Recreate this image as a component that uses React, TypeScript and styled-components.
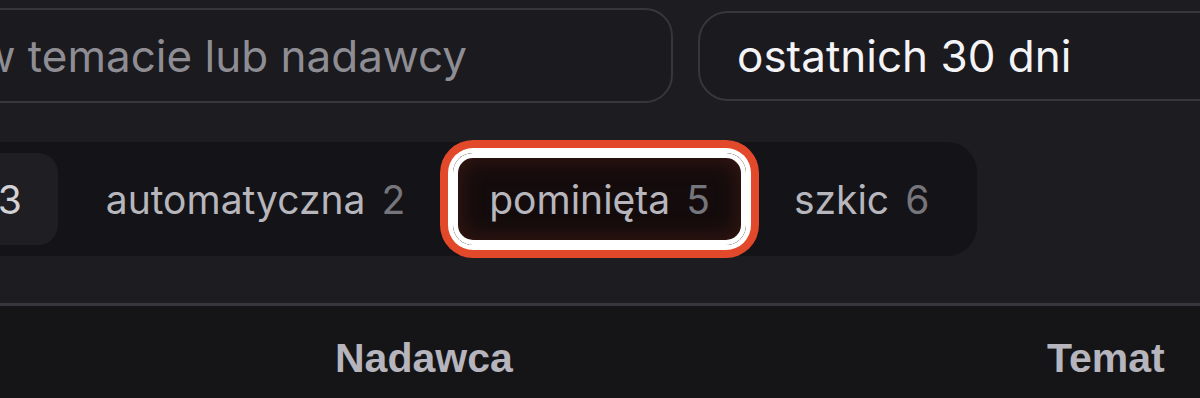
import React from "react";
import styled, { createGlobalStyle } from "styled-components";

const GlobalStyle = createGlobalStyle`
  html, body { margin: 0; padding: 0; background: #1d1c21; }
  body {
    width: 1200px;
    height: 398px;
    overflow: hidden;
    font-family: Inter, "Noto Sans", sans-serif;
  }
  #root { height: 398px; }
`;

const Page = styled.div`
  height: 398px;
  display: flex;
  flex-direction: column;
  overflow: hidden;
`;

const Toolbar = styled.div`
  display: flex;
  flex-direction: column;
  gap: 39px;
  padding: 8px 0 47px;
  margin-left: -220px;
`;

const FilterRow = styled.div`
  display: flex;
  align-items: center;
  gap: 25px;
`;

const SearchInput = styled.input`
  flex: 0 0 893px;
  height: 95px;
  box-sizing: border-box;
  border: 2px solid #37363d;
  border-radius: 28px;
  background: #1b1a1f;
  padding: 0 32px 0 47px;
  font-family: Inter, "Noto Sans", sans-serif;
  font-size: 44px;
  color: #e8e8ec;
  outline: none;
  &::placeholder { color: #8e8d94; }
`;

const Select = styled.div`
  flex: 0 0 700px;
  height: 90px;
  box-sizing: border-box;
  border: 2px solid #37363d;
  border-radius: 30px;
  background: #1b1a1f;
  padding: 0 37px;
  display: flex;
  align-items: center;
  font-size: 44px;
  color: #f4f4f7;
  white-space: nowrap;
`;

const Tabs = styled.div`
  align-self: flex-start;
  display: flex;
  gap: 12px;
  margin-left: -320px;
  padding: 11px 12px;
  background: #141317;
  border-radius: 30px;
`;

const Tab = styled.div<{ $active?: boolean; $marked?: boolean }>`
  height: 92px;
  box-sizing: border-box;
  padding: 0 36px;
  display: flex;
  align-items: center;
  gap: 16px;
  border-radius: 20px;
  font-size: 39px;
  white-space: nowrap;
  color: ${(p) => (p.$active ? "#d2d2d6" : "#b7b6bd")};
  background: ${(p) => (p.$active ? "#1f1e23" : p.$marked ? "#140c0c" : "transparent")};
  box-shadow: ${(p) =>
    p.$marked
      ? "inset 0 0 0 5px #ffffff, inset 0 0 22px 6px #3a1814, 0 0 0 5px #ffffff, 0 0 0 13px #e2492b"
      : "none"};
`;

const Count = styled.span<{ $active?: boolean }>`
  color: ${(p) => (p.$active ? "#d2d2d6" : "#76757c")};
`;

const Table = styled.div`
  flex: 1;
  background: #151517;
  border-top: 3px solid #38373d;
`;

const HeaderRow = styled.div`
  display: grid;
  grid-template-columns: 335px 712px 1fr;
  padding-top: 29px;
`;

const HeaderCell = styled.div`
  font-family: "Liberation Sans", Arial, sans-serif;
  font-weight: 700;
  font-size: 41px;
  color: #b6b5bd;
  white-space: nowrap;
`;

const tabs = [
  { label: "wszystkie", count: 16 },
  { label: "wysłana", count: 3, active: true },
  { label: "automatyczna", count: 2 },
  { label: "pominięta", count: 5, marked: true },
  { label: "szkic", count: 6 },
];

export default function App() {
  return (
    <Page>
      <GlobalStyle />
      <Toolbar>
        <FilterRow>
          <SearchInput placeholder="Szukaj w temacie lub nadawcy" />
          <Select>ostatnich 30 dni</Select>
        </FilterRow>
        <Tabs>
          {tabs.map((t) => (
            <Tab key={t.label} $active={t.active} $marked={t.marked}>
              {t.label}
              <Count $active={t.active}>{t.count}</Count>
            </Tab>
          ))}
        </Tabs>
      </Toolbar>
      <Table>
        <HeaderRow>
          <HeaderCell />
          <HeaderCell>Nadawca</HeaderCell>
          <HeaderCell>Temat</HeaderCell>
        </HeaderRow>
      </Table>
    </Page>
  );
}
